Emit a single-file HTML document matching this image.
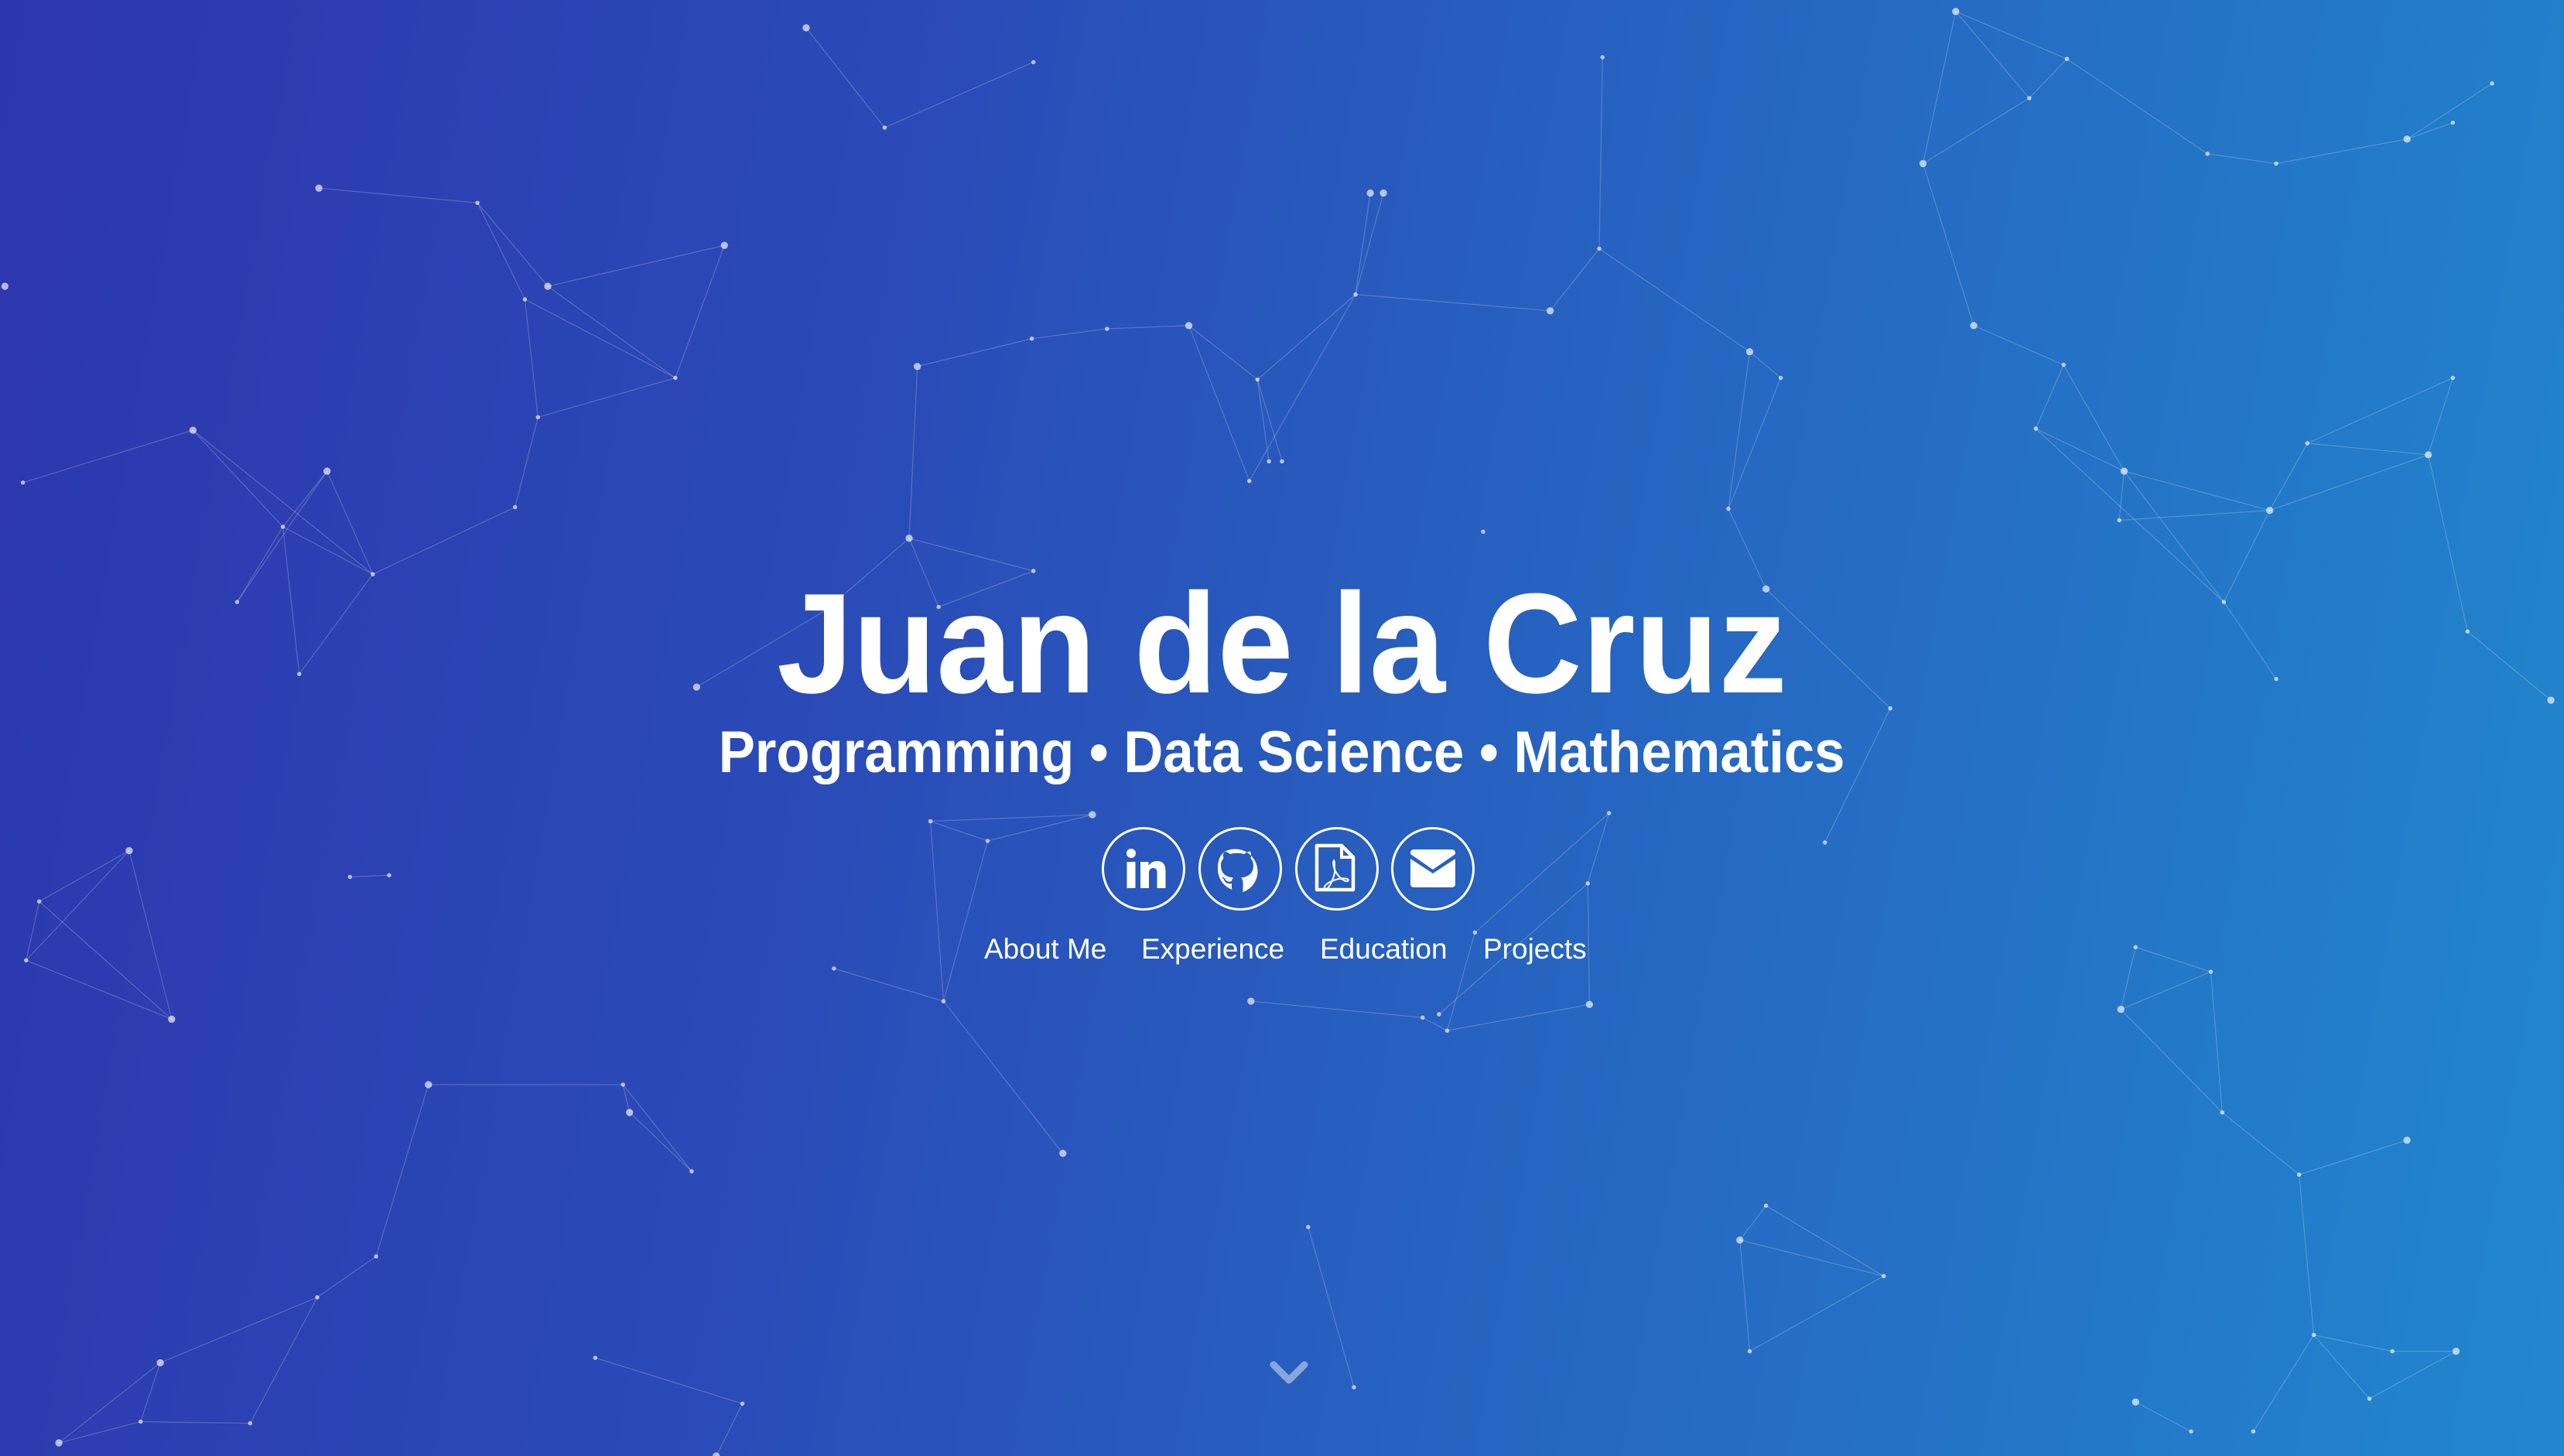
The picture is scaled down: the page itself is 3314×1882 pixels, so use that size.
<!DOCTYPE html>
<html><head><meta charset="utf-8">
<style>
html,body{margin:0;padding:0;}
body{width:3314px;height:1882px;overflow:hidden;position:relative;
background:linear-gradient(100deg,#2d36ad 0%,#2a4cb8 35%,#2668c2 65%,#2187cd 100%);
font-family:"Liberation Sans",sans-serif;color:#fff;}
svg.bg{position:absolute;left:0;top:0;}
.title{position:absolute;left:0;width:3314px;top:726px;text-align:center;font-weight:bold;font-size:184px;line-height:210px;}
.title span{display:inline-block;transform:scaleX(0.96);}
.sub{position:absolute;left:0;width:3314px;top:928px;text-align:center;font-weight:bold;font-size:76px;line-height:90px;}
.sub span{display:inline-block;transform:scaleX(0.93);}
.ic{position:absolute;width:102px;height:102px;border:3px solid #fff;border-radius:50%;top:1069px;}
.ic svg{position:absolute;left:0;top:0;}
.nav{position:absolute;top:1205px;font-size:37px;line-height:44px;}
</style></head><body>
<svg class="bg" width="3314" height="1882" viewBox="0 0 1568 890" preserveAspectRatio="none" id="bg"></svg>
<div class="title"><span>Juan de la Cruz</span></div>
<div class="sub"><span>Programming • Data Science • Mathematics</span></div>

<div class="ic" style="left:1424px">
<svg width="102" height="102" viewBox="0 0 102 102"><circle cx="35" cy="31" r="6" fill="#fff"/><rect x="29.5" y="42" width="11" height="34" fill="#fff"/><path d="M47 42h10.5v5c2-3.5 6-6 11-6c8 0 11 5 11 13v22h-11v-20c0-4-1.5-6-5-6s-5.5 2.5-5.5 6.5v19.5h-11z" fill="#fff"/></svg></div>
<div class="ic" style="left:1549px">
<svg width="102" height="102" viewBox="0 0 102 102"><path d="M41 78c-1-0.5-1-2-1-4v-4c-6 1-9-2-10-5c-1-2-3-3-3-3c2-0.5 4 1 5 3c2 3 5 3 8 2c0-2 1-3.5 2-4.5c-9-1-16-5-16-16c0-4 1.5-7 3.5-9c-0.5-2-1-5 0.5-9c3 0 6 2 8 3.5c3-1 6-1.200 9-1.200s6 .2 9 1.200c2-1.500 5-3.500 8-3.500c1.500 4 1 7 .5 9c2 2 3.500 5 3.500 9c0 11-7 15-16 16c1.500 1.200 2.500 3 2.500 6v9c0 2 0 3.500-1 4c12-4 20-15 20-27c0-16-13-29-29-29S22 35 22 51c0 12 7 23 19 27z" fill="#fff"/></svg></div>
<div class="ic" style="left:1674px">
<svg width="102" height="102" viewBox="0 0 102 102"><path d="M25 21h32l15 15v42h-47z" fill="none" stroke="#fff" stroke-width="4.5" stroke-linejoin="round"/><path d="M57 21v15h15" fill="none" stroke="#fff" stroke-width="4"/><path d="M48 40c-3 0-2 8 1 14c3 6 9 12 14 13c3 .5 4-2 1-3c-6-2-16 1-22 4c-6 3-9 8-6 9c3 1 7-6 9-11c2-5 4-12 3-16c0-8-.5-10-0-10" fill="none" stroke="#fff" stroke-width="2"/></svg></div>
<div class="ic" style="left:1798px">
<svg width="102" height="102" viewBox="0 0 102 102"><path d="M22 30c0-2 2-4 4-4h50c2 0 4 2 4 4v2l-29 20l-29-20z" fill="#fff"/><path d="M22 38l29 19l29-19v33c0 2-2 4-4 4h-50c-2 0-4-2-4-4z" fill="#fff"/></svg></div>

<div class="nav" style="left:1272px">About Me</div>
<div class="nav" style="left:1475px">Experience</div>
<div class="nav" style="left:1706px">Education</div>
<div class="nav" style="left:1917px">Projects</div>

<svg style="position:absolute;left:1640px;top:1758px" width="52" height="34" viewBox="0 0 52 34"><path d="M6 6l20 20l20-20" fill="none" stroke="rgba(255,255,255,0.45)" stroke-width="9" stroke-linecap="round" stroke-linejoin="round"/></svg>

<script>
var E=[[493,17,541,78],[541,78,632,38],[195,115,292,124],[292,124,321,183],[292,124,335,175],[321,183,413,231],[335,175,413,231],[321,183,329,255],[329,255,413,231],[413,231,443,150],[443,150,335,175],[329,255,315,310],[315,310,228,351],[118,263,173,322],[118,263,228,351],[14,295,118,263],[173,322,200,288],[200,288,228,351],[173,322,145,368],[145,368,200,288],[173,322,183,412],[228,351,183,412],[173,322,228,351],
[561,224,631,207],[631,207,677,201],[677,201,727,199],[727,199,769,232],[769,232,829,180],[829,180,846,118],[727,199,764,294],[769,232,784,282],[764,294,829,180],[829,180,948,190],[948,190,978,152],[978,152,980,35],[978,152,1070,215],[1070,215,1089,231],[1089,231,1057,311],[1070,215,1057,311],[1057,311,1080,360],[1080,360,1156,433],[1156,433,1116,515],[561,224,556,329],[556,329,632,349],[556,329,505,373],[505,373,426,420],[556,329,574,371],[574,371,632,349],[769,232,776,282],[838,118,829,180],
[569,502,604,514],[604,514,668,498],[569,502,668,498],[604,514,577,612],[510,592,577,612],[577,612,650,705],[569,502,577,612],
[984,497,971,540],[971,540,972,614],[972,614,885,630],[885,630,870,622],[870,622,765,612],[984,497,902,570],[902,570,885,630],[971,540,880,620],
[1196,7,1264,36],[1264,36,1241,60],[1196,7,1241,60],[1241,60,1176,100],[1196,7,1176,100],[1264,36,1350,94],[1350,94,1392,100],[1392,100,1472,85],[1472,85,1524,51],[1472,85,1500,75],[1176,100,1207,199],
[1207,199,1262,223],[1262,223,1245,262],[1262,223,1299,288],[1245,262,1299,288],[1299,288,1296,318],[1245,262,1360,368],[1296,318,1388,312],[1299,288,1388,312],[1388,312,1360,368],[1360,368,1392,415],[1388,312,1411,271],[1411,271,1485,278],[1485,278,1500,231],[1411,271,1500,231],[1485,278,1388,312],[1485,278,1509,386],[1509,386,1560,428],[1299,288,1360,368],
[1306,579,1352,594],[1352,594,1297,617],[1306,579,1297,617],[1297,617,1359,680],[1352,594,1359,680],[1359,680,1406,718],[1406,718,1472,697],[1406,718,1415,816],[1415,816,1463,826],[1463,826,1502,826],[1415,816,1449,855],[1449,855,1502,826],[1415,816,1378,875],[1306,857,1340,875],
[1080,737,1064,758],[1064,758,1070,826],[1080,737,1152,780],[1064,758,1152,780],[1070,826,1152,780],
[79,520,24,551],[24,551,16,587],[79,520,105,623],[16,587,105,623],[79,520,16,587],[24,551,105,623],[214,536,238,535],
[262,663,381,663],[381,663,423,716],[381,663,385,680],[385,680,423,716],[262,663,230,768],[230,768,194,793],[194,793,98,833],[194,793,153,870],[98,833,86,869],[86,869,153,870],[98,833,36,882],[86,869,36,882],
[364,830,454,858],[454,858,438,890],[800,750,828,848]];
var s='',pts={};
E.forEach(function(e){s+='<line x1="'+e[0]+'" y1="'+e[1]+'" x2="'+e[2]+'" y2="'+e[3]+'" stroke="rgba(255,255,255,0.2)" stroke-width="0.6"/>';pts[e[0]+','+e[1]]=1;pts[e[2]+','+e[3]]=1;});
pts['3,175']=1;pts['907,325']=1;
var i=0;
for(var k in pts){var p=k.split(',');var r=(i++%3==0)?2.2:1.3;s+='<circle cx="'+p[0]+'" cy="'+p[1]+'" r="'+r+'" fill="rgba(255,255,255,0.65)"/>';}
document.getElementById('bg').innerHTML=s;
</script>
</body></html>
